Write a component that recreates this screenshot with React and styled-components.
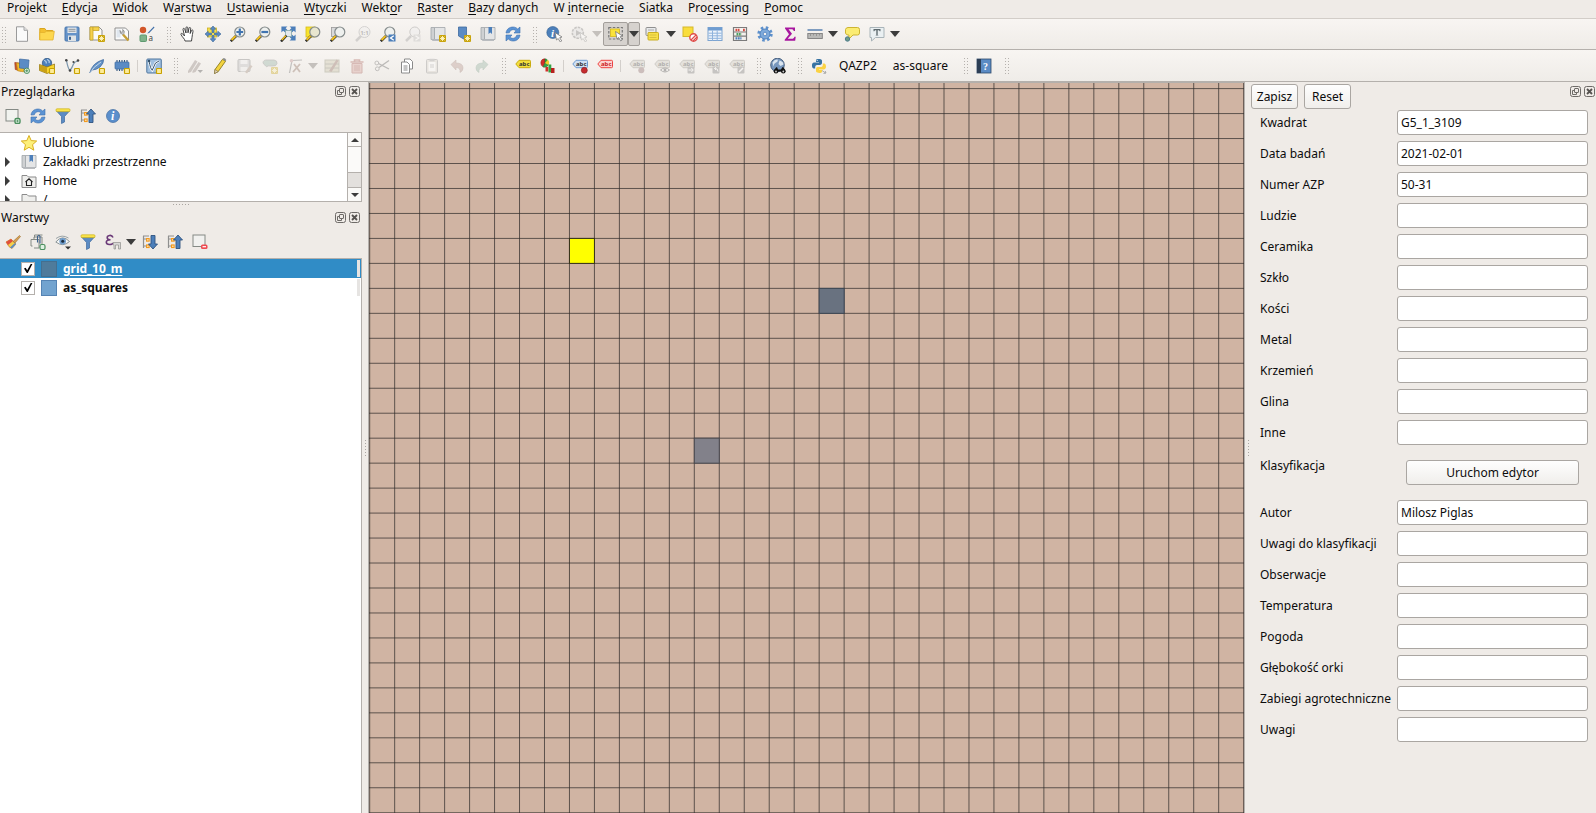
import React from "react";
import styled, { createGlobalStyle, css } from "styled-components";

const color = {
  panel: "#efebe7",
  line: "#b4b0ac",
  field: "#aaa6a2",
  text: "#0c0c0c",
};

const GlobalStyle = createGlobalStyle`
  *, *::before, *::after { box-sizing: border-box; }
  body {
    margin: 0;
    background: ${color.panel};
    color: ${color.text};
    font: 12px/16px "Noto Sans", "Open Sans", sans-serif;
  }
  button, input { font: inherit; color: inherit; margin: 0; }
  svg { display: block; flex: none; }
`;

/* ---------- icon parts ---------- */

const Svg = styled.svg.attrs({ viewBox: "0 0 16 16", "aria-hidden": true })`
  width: 16px;
  height: 16px;
  opacity: ${(p) => (p.$dim ? 0.35 : 1)};
`;

const NewBadge = () => (
  <g>
    <rect x="9" y="9" width="7" height="7" rx="1" fill="#c9a40c" />
    <path d="M12.500 10v5M10 12.500h5M10.700 10.700l3.600 3.600M14.300 10.700l-3.600 3.600" stroke="#fff6c4" strokeWidth=".9" />
  </g>
);
const SquareBadge = () => (
  <rect x="10.500" y="10.500" width="5" height="5" rx=".8" fill="#fdec9a" stroke="#c8a100" strokeWidth="1.200" />
);
const Lens = ({ fill = "#eef0ee" }) => (
  <g>
    <path d="M.8 15.200L6 10" stroke="#2b2b2b" strokeWidth="2.600" />
    <path d="M1.600 14L5.600 10" stroke="#f0bf1c" strokeWidth="1.800" />
    <circle cx="9.800" cy="6" r="5" fill={fill} stroke="#858c8c" strokeWidth="1.200" />
  </g>
);
const Cursor = ({ x = 8, y = 6 }) => (
  <path
    transform={`translate(${x} ${y})`}
    d="M0 0l1.500 7.500 1.700-1.500 2 3.400 1.500-.9-2-3.300 2.300-.7z"
    fill="#fff"
    stroke="#777"
    strokeWidth=".8"
  />
);
const Tag = ({ fill = "#f2df3c", stroke = "#c9ab10", ink = "#333", y = 0 }) => (
  <g transform={`translate(0 ${y})`}>
    <path d="M.8 7L4 3.300h10.500q1 0 1 1v5.400q0 1-1 1H4z" fill={fill} stroke={stroke} strokeWidth="1" />
    <text x="4" y="9" fontSize="6" fontWeight="700" fontFamily="Noto Sans, sans-serif" fill={ink}>abc</text>
  </g>
);
const Bookmark = () => (
  <g>
    <path d="M1 1.500h3.500v12H1z" fill="#cfd1d3" stroke="#a0a4a8" strokeWidth=".8" />
    <path d="M4.500 1.500H15v12H4.500z" fill="#e4e5e6" stroke="#a0a4a8" strokeWidth=".8" />
    <path d="M1.500 13.500h12.500v1.500H2.500z" fill="#b9bcbf" />
  </g>
);
const TreeLines = () => (
  <g fill="none">
    <path d="M1.500 2v12M1.500 5h4M1.500 12h4M1 2h6" stroke="#8f8f8f" strokeWidth="1.200" />
    <rect x="4.600" y="4.600" width="2.500" height="2.500" fill="#fff2d9" stroke="#f29a1f" strokeWidth="1.200" />
    <rect x="4.600" y="11" width="2.500" height="2.500" fill="#fff2d9" stroke="#f29a1f" strokeWidth="1.200" />
  </g>
);
const Sheet = ({ fill = "#fafafa" }) => (
  <path d="M2.500.8h7.500l3.500 3.500v11H2.500z" fill={fill} stroke="#9a9a9a" strokeWidth="1" />
);

const icons = {
  fresh: <g><Sheet /><path d="M10 .8v3.500h3.500" fill="#e2e2e2" stroke="#a5a5a5" /></g>,
  open: <g><path d="M.8 14V2.500h5l1.500 2h6.500V7" fill="#f3bf2f" stroke="#d9a51f" /><path d="M.8 14V6.500h5l1.500-1.200h8L14 14z" fill="#fdd74e" stroke="#e3b12c" strokeWidth=".8" /></g>,
  save: <g><rect x="1" y="1" width="14" height="14" rx="1" fill="#6593c9" stroke="#4a77ac" /><rect x="3.500" y="1.500" width="9" height="5.500" fill="#e6e9ec" /><path d="M4.500 3.300h7M4.500 5.200h7" stroke="#8a9199" /><rect x="4" y="9.500" width="8" height="5.500" fill="#dfe3e6" /><rect x="5" y="10.800" width="2" height="3" fill="#3f6592" /></g>,
  layout: <g><path d="M1 1h9l3 3v10H1z" fill="#fbfbf7" stroke="#8f8f8f" /><path d="M1 1h3v13H1z" fill="#f5d14c" stroke="#c9a72a" strokeWidth=".8" /><path d="M4 1h6v3.500H4z" fill="#f5d14c" stroke="#c9a72a" strokeWidth=".8" /><NewBadge /></g>,
  manager: <g><path d="M1 2h10.500l3 3v9H1z" fill="#fbfbfb" stroke="#8f8f8f" /><path d="M2.500 3.500h4v8h-4z" fill="#dfe6ee" /><path d="M9 8.500l5.500 6" stroke="#c79f33" strokeWidth="2.400" /><path d="M6 4.500q-.5 3.500 3 4l1-1.200q1-2.500-1.300-3.800l.3 2.200-1.500.7z" fill="#d7d7d7" stroke="#777" strokeWidth=".7" /></g>,
  style: <g><circle cx="4" cy="4" r="3.200" fill="#d2562a" /><path d="M14.800.5L9.500 6l-1.300 1.600 2-.6L15.500 1.500z" fill="#3f6ea8" /><rect x="1" y="9" width="6.500" height="6.500" rx="1" fill="#7fb28b" stroke="#5f9a70" /><text x="9.500" y="15" fontSize="8" fontFamily="Noto Sans, sans-serif" fill="#444">a</text></g>,
  hand: <path d="M5 15c0-2-3-4-4-6.500-.4-1.200 1-1.500 1.800-.5L4.500 10 3 3.500c-.3-1.300 1.300-1.600 1.700-.4L6 7V1.800c0-1.300 1.700-1.300 1.800 0L8 6.800l1-4.600c.3-1.200 1.900-.8 1.700.4L10.200 7.500l1.300-3c.5-1.100 1.900-.5 1.500.9-.5 2.300-.7 4-1 6L11.500 15z" fill="#fff" stroke="#333" strokeWidth=".9" />,
  pan: <g><rect x="2.500" y="2" width="9" height="9" fill="#f6e04d" stroke="#cdb022" strokeWidth=".8" /><path d="M8 0l2.800 3.200H9V6.500H7V3.200H5.200zM8 16l-2.800-3.200H7V9.500h2v3.300h1.800zM0 8l3.200-2.800V7h3.300v2H3.200v1.800zM16 8l-3.200 2.800V9H9.500V7h3.300V5.200z" fill="#5b8bc4" stroke="#3b6697" strokeWidth=".6" /></g>,
  zoomIn: <g><Lens /><path d="M9.800 2.600v6.800M6.400 6h6.800" stroke="#3f73b0" strokeWidth="2.200" /></g>,
  zoomOut: <g><Lens /><path d="M6.400 6h6.800" stroke="#3f73b0" strokeWidth="2.200" /></g>,
  zoomFull: <g><path d="M2 1h4L4.800 2.200 7 4.400 5.400 6 3.200 3.800 2 5zM15 1v4l-1.200-1.200L11.600 6 10 4.400l2.200-2.200L11 1zM15 14h-4l1.200-1.200L10 10.600 11.600 9l2.200 2.200L15 10z" fill="#4c7fba" stroke="#4c7fba" strokeWidth="1.200" /><rect x="5.500" y="4.500" width="6" height="6" fill="#e3e8ea" stroke="#8aa" strokeWidth=".8" /><path d="M1 15.500L6.500 9.500" stroke="#2b2b2b" strokeWidth="2.400" /><path d="M1.800 14L5.800 9.800" stroke="#f0bf1c" strokeWidth="1.500" /></g>,
  zoomSel: <g><rect x="1" y="1" width="9" height="10" fill="#f8e32d" stroke="#d5bc1b" strokeWidth=".8" /><Lens fill="#e8e6cf" /></g>,
  zoomLayer: <g><rect x="1.500" y="1.500" width="8" height="9" fill="#d9dadb" stroke="#999" strokeWidth=".8" /><Lens /></g>,
  zoomNative: <g><path d="M1 15L6 10" stroke="#999" strokeWidth="2.500" /><circle cx="9.500" cy="6" r="5.500" fill="#eee" stroke="#999" /><text x="5.200" y="8.500" fontSize="6" fontWeight="700" fontFamily="Noto Sans, sans-serif" fill="#555">1:1</text></g>,
  zoomPrev: <g><Lens /><rect x="8.500" y="8.500" width="7" height="7" fill="#4c7fba" /><path d="M13.800 9.800L10.500 12l3.300 2.200" fill="none" stroke="#fff" strokeWidth="1.300" /></g>,
  zoomNext: <g><path d="M1 15L6 10" stroke="#999" strokeWidth="2.500" /><circle cx="9.800" cy="6" r="5" fill="#eee" stroke="#888" /><rect x="8.500" y="8.500" width="7" height="7" fill="#bbb" /><path d="M10.500 9.800l3.300 2.200-3.300 2.200" fill="none" stroke="#fff" strokeWidth="1.300" /></g>,
  mapNew: <g><Bookmark /><NewBadge /></g>,
  markNew: <g><path d="M3.500 1h8v11.500l-1 1.500-7-4z" fill="#5b8bc4" stroke="#3d6a9f" strokeWidth=".8" /><NewBadge /></g>,
  bookmarks: <g><Bookmark /><path d="M8.500 1h3.500v7l-1.700-1.500L8.500 8z" fill="#4c7fba" /></g>,
  refresh: <g fill="#5b93d4" stroke="#3d6fad" strokeWidth=".6"><path d="M1 7C1.500 3 4.500 1 8 1c2 0 3.500.8 4.700 2L15 1v6H9l2-2.200C9 3 5.500 3.200 4.300 6.800z" /><path d="M15 9c-.5 4-3.500 6-7 6-2 0-3.500-.8-4.700-2L1 15V9h6l-2 2.200C7 13 10.500 12.800 11.700 9.200z" /></g>,
  identify: <g><circle cx="6.800" cy="6.500" r="6" fill="#4c7fba" stroke="#34608f" strokeWidth=".6" /><text x="5" y="10.500" fontSize="11" fontStyle="italic" fontWeight="700" fontFamily="Liberation Serif, serif" fill="#fff">i</text><Cursor x={9} y={6.500} /></g>,
  action: <g><circle cx="6.800" cy="6.800" r="5.500" fill="#ddd" stroke="#777" strokeWidth="1.600" strokeDasharray="2.600 1" /><path d="M5 4l5 3-5 3z" fill="#777" /><Cursor x={9} y={6.500} /></g>,
  select: <g><rect x=".8" y="1.500" width="13.500" height="11.500" fill="none" stroke="#777" strokeWidth="1.200" strokeDasharray="2.500 1.500" /><rect x="2.500" y="3" width="9" height="7.500" fill="#fbe33a" stroke="#d6b81b" strokeWidth=".8" /><Cursor x={7.500} y={5.500} /></g>,
  form: <g><rect x="1" y="1.500" width="10" height="8" rx=".8" fill="#e8eaec" stroke="#8f8f8f" /><path d="M3 4h6M3 6.500h6" stroke="#aaa" /><rect x="3" y="6.500" width="10.500" height="7.500" rx=".8" fill="#f8e04a" stroke="#c9ae22" /><path d="M4.500 9h7M4.500 11.500h7" stroke="#d8c040" /></g>,
  deselect: <g><rect x="1" y="1" width="10" height="9.500" fill="#f9dd3c" stroke="#d5b82a" /><circle cx="11.500" cy="11.500" r="3.700" fill="#fff" stroke="#df4d4a" strokeWidth="1.400" /><path d="M9 14l5-5M11 15l4-4" stroke="#df4d4a" strokeWidth="1.200" /></g>,
  table: <g><rect x="1" y="1.500" width="14" height="13" fill="#eef4fb" stroke="#7da4d0" /><path d="M1 1.500h14v3H1z" fill="#6f9dd1" /><path d="M1.500 7.200h13M1.500 9.800h13M1.500 12.300h13M5.500 4.500v10M10.200 4.500v10" stroke="#8fb3dc" strokeWidth="1" /></g>,
  abacus: <g><path d="M1.500 1v14M14.500 1v14M1 1.500h14M1 14.500h14M1 6h14M1 10.200h14" fill="none" stroke="#7b7b7b" strokeWidth="1.200" /><path d="M3.500 4h4M11 4h2" stroke="#d64b40" strokeWidth="2.400" strokeDasharray="1.800 .6" /><path d="M4.500 8.200h5" stroke="#4b9f62" strokeWidth="2.400" strokeDasharray="1.800 .6" /><path d="M3.500 12.400h6" stroke="#4c7fba" strokeWidth="2.400" strokeDasharray="1.800 .6" /></g>,
  gear: <g><circle cx="8" cy="8" r="6.200" fill="none" stroke="#5d90cc" strokeWidth="3" strokeDasharray="2.435 2.435" /><circle cx="8" cy="8" r="5" fill="#7faadb" stroke="#4f82bf" /><circle cx="8" cy="8" r="1.800" fill="#f4f2ef" stroke="#4f82bf" strokeWidth=".8" /></g>,
  sigma: <path d="M3 1.500h10v3.500h-1.300c-.2-1.300-.9-1.800-2.500-1.800H6.500L10 7.700l-4.300 5h4c1.700 0 2.300-.6 2.700-2h1.300l-.5 4H2.700v-1L7 8.200 3 2.500z" fill="#a8169f" />,
  measure: <g><path d="M.5 4h15" stroke="#3f6ea8" strokeWidth="1.300" /><rect x=".8" y="7.500" width="14.500" height="5" fill="#b9b9b7" stroke="#7e7e7e" strokeWidth=".9" /><path d="M3.500 7.500v2.500M6.500 7.500v2M9.500 7.500v2.500M12.500 7.500v2" stroke="#8a8a8a" strokeWidth=".8" /></g>,
  tip: <g><path d="M4 1.500h9.500q2 0 2 2V7q0 2-2 2H9l-4.500 4.500L5 9H4Q2 9 1.500 7V3.500q.5-2 2.500-2z" fill="#fbec72" stroke="#cdb432" /><circle cx="3.500" cy="13" r="2.200" fill="#6d9c86" stroke="#4d7b8d" /></g>,
  textNote: <g><path d="M1 1.500h14v10H6.500L2.500 15v-3.500H1z" fill="#eaf0f2" stroke="#a9b4b9" /><path d="M4.500 3h7v2.200h-.8L10 4.200H8.700v4.900l1 .5H6.300l1-.5V4.200H6l-.7 1h-.8z" fill="#5f6b70" /></g>,

  source: <g><path d="M.8 4.500l7 1-1 7.500-5.500-1.500z" fill="#c9552d" stroke="#a23f1d" strokeWidth=".7" /><path d="M2.500 5l8 .8-.8 8-6-1z" fill="#f0b92d" stroke="#c38c14" strokeWidth=".7" /><path d="M5.500 1l9.500 1-.8 9-8.700-1z" fill="#5b8bc4" stroke="#3d6a9f" strokeWidth=".7" /><circle cx="12.800" cy="12.800" r="2.700" fill="#e9f4ec" stroke="#4b8f5e" /><path d="M12.800 11.300v3M11.300 12.800h3" stroke="#4b8f5e" /></g>,
  geopackage: <g><circle cx="8" cy="5" r="4.700" fill="#4c7fba" stroke="#2b4f7a" strokeWidth=".7" /><path d="M5 2.500q3 .5 2 3M8 1.500q3 1 2 3.500" stroke="#bcd3ea" fill="none" strokeWidth="1.200" /><path d="M.5 6.500L8 9l7.500-3v6.500L8 15.500l-7.500-3z" fill="#f8d52e" stroke="#8b6d10" strokeWidth=".7" /><path d="M.8 7L8 9.200v6l-7.200-3z" fill="#caa117" /><SquareBadge /></g>,
  vector: <g><path d="M2.500 2.500Q4 11 6 12.500 8 10 9.500 6q.8-2 4-3" fill="none" stroke="#7d98ae" strokeWidth="1.300" /><circle cx="2.300" cy="2.300" r="1.300" fill="#444" /><circle cx="6" cy="12.500" r="1.300" fill="#444" /><circle cx="9.500" cy="4" r="1.100" fill="#444" /><circle cx="14" cy="2.500" r="1.300" fill="#444" /><SquareBadge /></g>,
  feather: <g><path d="M.8 15Q3 5 14.500 1.500 15 5 11 9q-4 3-8 3z" fill="#6694c8" stroke="#3d6a9f" strokeWidth=".8" /><path d="M1 15Q4 9 12 4" stroke="#dce8f3" strokeWidth=".8" fill="none" /><SquareBadge /></g>,
  chip: <g><path d="M3 2v11M5.500 2v11M8 2v11M10.500 2v11M13 2v11" stroke="#33557d" strokeWidth="1.100" /><rect x="1" y="4" width="14" height="7" rx=".8" fill="#5b8bc4" stroke="#3d6a9f" strokeWidth=".7" /><SquareBadge /></g>,
  virtual: <g><rect x=".8" y="1" width="14.500" height="14" rx="1" fill="#9fbfdf" stroke="#50779f" /><path d="M3 3q1.500 8 3.200 9.300L9.500 5l3.500-2" fill="none" stroke="#fff" strokeWidth="2.400" /><path d="M3 3q1.500 8 3.200 9.300L9.500 5l3.500-2" fill="none" stroke="#36536e" strokeWidth="1" /><circle cx="3" cy="3" r="1.300" fill="#36536e" /><SquareBadge /></g>,
  edits: <g><path d="M1 13L8 2l2.500 1.500L4 14l-3 1zM5.500 13l6-9 2.500 1.500L8.500 14l-3 1z" fill="#8c7f7a" /><path d="M10.500 12h5.500L13.200 15z" fill="#444" /></g>,
  pencil: <g><path d="M3 11.500L10.500 1.300l3 2L6.200 13.600 2.500 15.500z" fill="#f3d33f" stroke="#8b7a1d" strokeWidth=".9" /><path d="M10.500 1.300l3 2 .8-1.200q-1-1.900-2.700-2z" fill="#8c8c8c" /><path d="M3 11.500l3.200 2.100-3.700 1.900z" fill="#e9d8b4" stroke="#7b6b4b" strokeWidth=".6" /></g>,
  saveEdits: <g><rect x="1" y="1.500" width="12" height="12" rx="1" fill="#b9b9bb" stroke="#777" /><rect x="3.500" y="2" width="7" height="4" fill="#eee" /><rect x="3.500" y="9" width="7" height="4.500" fill="#eee" /><path d="M8 14l5.500-7 2 1.300L10 15.500z" fill="#a08a7a" /></g>,
  addPolygon: <g><path d="M1 5q0-3.500 5-3h6q3.500.5 3 3.500T10 8 5 8.500 1 5z" fill="#8faf9f" stroke="#777" strokeWidth=".8" /><NewBadge /></g>,
  vertex: <g><path d="M2.500 15L5 2.500 15 2" fill="none" stroke="#666" strokeWidth="1.200" /><path d="M6 14l7-8M7 6l6 8" stroke="#8b6a5a" strokeWidth="1.800" /><circle cx="4.500" cy="2.800" r="1.800" fill="#b88" /></g>,
  modify: <g><rect x="1" y="2" width="14" height="12" fill="#c9c3a6" stroke="#8a8a70" /><path d="M1 6h14M1 10h14" stroke="#7f7f6c" /><path d="M5 13L12.500 1.500l2 1.300L7.500 14z" fill="#8b6558" /></g>,
  trash: <g><path d="M1.500 4h13M5.500 4V2h5v2" fill="none" stroke="#a2544c" strokeWidth="1.600" /><path d="M3 5.500h10V15H3z" fill="#d49c95" stroke="#a2544c" /><path d="M6 7v6M8 7v6M10 7v6" stroke="#a2544c" /></g>,
  cut: <g><path d="M15 2.500L5 9.500M15 11L4.500 5.500" stroke="#555" strokeWidth="1.300" /><circle cx="2.800" cy="5" r="1.900" fill="none" stroke="#666" /><circle cx="3.300" cy="10.800" r="1.900" fill="none" stroke="#666" /></g>,
  copy: <g fill="#fff" stroke="#8a8a8a"><path d="M5.500 1h5.500l2.500 2.500V11h-8z" /><path d="M2.500 4h5.500l2.500 2.500V15h-8z" /><path d="M4.500 8h4M4.500 10h4M4.500 12h4" /></g>,
  paste: <g><rect x="2.500" y="1.500" width="11" height="13.500" rx="1" fill="#d6d2ca" stroke="#888" /><rect x="4.500" y="4" width="7" height="9" fill="#fff" /><rect x="5.500" y=".8" width="5" height="2.500" fill="#999" /><path d="M6 7h4M6 9h4" stroke="#999" /></g>,
  undo: <path d="M2 6.500L7 2v3Q14 5 14 10q0 3-3 4.500.8-5-4-5V12z" fill="#b39087" stroke="#8c6d65" strokeWidth=".6" />,
  redo: <path d="M14 6.500L9 2v3Q2 5 2 10q0 3 3 4.500-.8-5 4-5V12z" fill="#8fae9c" stroke="#6b8f7a" strokeWidth=".6" />,
  tag: <Tag y={-1} />,
  diagram: <g><path d="M5 5V.8A4.300 4.300 0 0 0 .8 5q0 3 2.400 3.800z" fill="#d22f2a" stroke="#8c1b17" strokeWidth=".5" /><path d="M5 5L3 9q3.500 1 5-1.500T7 1.500L5 .8z" fill="#36a345" stroke="#1d6e2a" strokeWidth=".5" /><path d="M5 5l3-3.200Q10 4 8.500 7z" fill="#f5d02c" /><rect x="5.500" y="9" width="2.800" height="4.500" fill="#d22f2a" /><rect x="8.500" y="6.500" width="2.800" height="8" fill="#36a345" /><rect x="11" y="10" width="3.500" height="5" fill="#b7211d" /></g>,
  tagPin: <g><Tag fill="#cfe0f3" stroke="#6d9bd0" y={-1} /><circle cx="12.300" cy="12.300" r="3" fill="#c52b2f" stroke="#8c1b1d" strokeWidth=".6" /></g>,
  tagRed: <Tag fill="#fbd3d1" stroke="#ee4440" ink="#c22" y={-1} />,
  tagDot: <g><Tag fill="#c9c6bd" stroke="#8a877e" y={-1} /><circle cx="12.300" cy="12.300" r="3" fill="#866" /></g>,
  tagEye: <g><Tag fill="#c9c6bd" stroke="#8a877e" y={-1} /><path d="M6.500 12q4.500-4 9 0-4.500 4-9 0z" fill="#fff" stroke="#444" /><circle cx="11" cy="12" r="1.500" fill="#444" /></g>,
  tagMove: <g><Tag fill="#c9c6bd" stroke="#8a877e" y={-1} /><rect x="8.500" y="8.500" width="7" height="7" rx="1" fill="#777" /><path d="M9.500 12h4.500M12.300 10l2 2-2 2" stroke="#fff" fill="none" /></g>,
  tagTurn: <g><Tag fill="#c9c6bd" stroke="#8a877e" y={-1} /><rect x="8.500" y="8.500" width="7" height="7" rx="1" fill="#777" /><path d="M14 13.500q0-3.500-3.500-3l1.500-1.200M10.500 10.500l1.500 1.500" stroke="#fff" fill="none" /></g>,
  tagEdit: <g><Tag fill="#c9c6bd" stroke="#8a877e" y={-1} /><rect x="8.500" y="8.500" width="7" height="7" rx="1" fill="#777" /><path d="M10 14l4-4" stroke="#fff" strokeWidth="1.600" /></g>,
  globe: <g><circle cx="7.500" cy="7" r="6.800" fill="#7897bd" stroke="#2c4669" strokeWidth=".8" /><path d="M2.500 4.500q2-3.500 5-3 1 2-1.500 3T3.500 8.500zM9.500 2.500q4 1 4 4l-3 1.500-2-2z" fill="#dbe5ef" /><path d="M4 13.500Q5 9.500 7 9l1 2.500h3L12.500 9q2 .5 3 4.500z" fill="#111" /><circle cx="6" cy="13.300" r="2.300" fill="#111" /><circle cx="13.300" cy="13.300" r="2.300" fill="#111" /><circle cx="6" cy="13.500" r=".9" fill="#ccc" /><circle cx="13.300" cy="13.500" r=".9" fill="#ccc" /></g>,
  python: <g><path d="M7.500 1C4.800 1 5 2.200 5 2.200V4h3v.6H3.300S1 4.400 1 7.500 3 10.500 3 10.500h1.200V8.900s0-2 2-2h3s1.800 0 1.800-1.800V2.900S11.300 1 7.500 1z" fill="#3873a3" /><circle cx="6.200" cy="2.500" r=".6" fill="#fff" /><path d="M8.500 15c2.700 0 2.500-1.200 2.500-1.200V12H8v-.6h4.700s2.300.2 2.300-2.900-2-3-2-3h-1.200v1.600s0 2-2 2h-3S5 9.100 5 10.900v2.200S4.700 15 8.500 15z" fill="#fbd243" /><path d="M11 12.500l3.500 2.500M12.500 15.500l2.500-.5-.8-2" stroke="#999" fill="none" strokeWidth=".8" /></g>,
  help: <g><rect x="1" y="1" width="14" height="14" fill="#5b8bc4" stroke="#2f4a6a" strokeWidth=".8" /><rect x="1" y="1" width="4" height="14" fill="#2c3e55" /><text x="7" y="11.500" fontSize="10" fontWeight="700" fontFamily="Liberation Serif, serif" fill="#fff">?</text></g>,

  addLayer: <g><rect x="1" y="1.500" width="12" height="11.500" fill="#f1f3ef" stroke="#858a85" /><rect x="10" y="10.500" width="5" height="5" rx="1.500" fill="#dff0e2" stroke="#4b8f5e" strokeWidth="1.400" /><path d="M12.500 11.800v2.500M11.200 13h2.600" stroke="#4b8f5e" strokeWidth=".8" /></g>,
  removeLayer: <g><rect x="1" y="1" width="12" height="11.500" fill="#f1f1ef" stroke="#858a85" /><rect x="9" y="10.500" width="6.500" height="4.500" rx="1.500" fill="#ee4b52" /><path d="M10.500 12.700h3.500" stroke="#fff" strokeWidth="1.200" /></g>,
  filter: <g><path d="M1.500 3h13L9.500 8.500V14L6.500 15.500v-7z" fill="#5b8bc4" stroke="#3d6a9f" strokeWidth=".7" /><rect x="1" y=".8" width="14" height="2.800" rx="1" fill="#f9e34a" stroke="#cdb120" strokeWidth=".7" /></g>,
  collapse: <g><TreeLines /><path d="M11 1l4.500 5H13v8.500H9V6H6.500z" fill="#4c7fba" stroke="#2f5480" strokeWidth=".9" /></g>,
  expand: <g><TreeLines /><path d="M11 15l4.500-5H13V1.500H9V10H6.500z" fill="#4c7fba" stroke="#2f5480" strokeWidth=".9" /></g>,
  info: <g><circle cx="8" cy="8" r="6.500" fill="#5b8fcc" stroke="#3d6a9f" strokeWidth=".7" /><text x="6" y="12" fontSize="12" fontStyle="italic" fontWeight="700" fontFamily="Liberation Serif, serif" fill="#fff">i</text></g>,
  brush: <g><path d="M1 8l5-3 5 5-4 4.500q-3-.5-6-6.500z" fill="#f4cf4a" stroke="#cf7f34" strokeWidth=".7" /><path d="M1 8l2 3 5-4-2-2z" fill="#df4f3e" /><path d="M5 13.500l5-4.500 1 1-4 4.500z" fill="#5b8bc4" /><path d="M8 7.500L14.500 1.500l1 1L10 9z" fill="#d6a054" stroke="#9a6c2a" strokeWidth=".6" /></g>,
  group: <g><path d="M4.500 3.500V1h8M2.500 12H1V5.500h8V14H4" fill="none" stroke="#858a85" /><path d="M4 5.500V3h8v9" fill="none" stroke="#858a85" /><path d="M7.500 8.500v-6q1.500-2.500 2.500 0v7" fill="none" stroke="#3c618c" strokeWidth="1.100" /><rect x="10" y="10.500" width="5" height="5" rx="1.500" fill="#dff0e2" stroke="#4b8f5e" strokeWidth="1.200" /></g>,
  eye: <g><path d="M.8 8Q7.500 0 14.500 7.500 8 13.500.8 8z" fill="#f3f5f5" stroke="#8a9396" /><circle cx="7.700" cy="7.300" r="3.300" fill="#6f9dcd" /><circle cx="7.700" cy="7.300" r="1.500" fill="#1d2d3d" /><path d="M1 4.500Q7 0 13.500 4" fill="none" stroke="#9aa3a6" /><path d="M10 12.500h6l-3 3z" fill="#333" /></g>,
  epsilon: <g><path d="M8 3.500Q7 1 4.500 1.500 2 2 2.200 3.800T5.500 5.800Q1.200 6 1.300 8.300T4.500 10.500 8 9" fill="none" stroke="#6b3a78" strokeWidth="1.600" /><path d="M8 8.500h7.500V15h-2v-4h-3v4h-1.500v-3z" fill="#d8d8d6" stroke="#8f8f8d" strokeWidth=".7" /></g>,

  star: <path d="M8 .5l2.200 5.100 5.500.4-4.200 3.700 1.300 5.500L8 12.300l-4.800 2.900 1.300-5.500L.3 6l5.500-.4z" fill="#fdf07a" stroke="#d9ae1e" strokeWidth="1" />,
  home: <g><path d="M1 14.500v-12h5l1.500 1.500H15v10.500z" fill="#efefed" stroke="#8b8b8b" /><path d="M4.500 9L8 5.800 11.500 9M5.500 8.500v4h5v-4" fill="none" stroke="#222" strokeWidth="1.100" /></g>,
  folder: <path d="M1 14.500v-12h5l1.500 1.500H15v10.500z" fill="#efefed" stroke="#8b8b8b" />,
};

const Icon = ({ name, dim }) => <Svg $dim={dim}>{icons[name]}</Svg>;

/* ---------- shell ---------- */

const Window = styled.div`
  display: flex;
  flex-direction: column;
  height: 100vh;
  overflow: hidden;
`;

const MenuBar = styled.nav`
  display: flex;
  flex: none;
  align-items: flex-start;
  height: 18px;
`;

const MenuItem = styled.button`
  padding: 0 8px 0 7px;
  border: 0;
  background: none;
  line-height: 15px;
  white-space: nowrap;

  u {
    text-underline-offset: 2px;
  }
`;

const Toolbar = styled.div`
  display: flex;
  flex: none;
  align-items: center;
  height: 32px;
  padding-left: 1px;
  border-top: ${(p) => (p.$first ? "1px solid #d2cdc8" : "0")};
  border-bottom: 1px solid ${color.line};
  background: linear-gradient(#f8f5f2, #efece8);
`;

const Grip = styled.span`
  flex: none;
  width: 5px;
  height: 17px;
  margin: 0 ${(p) => (p.$lead ? 3 : 4)}px 0 ${(p) => (p.$lead ? 0 : 7)}px;
  background: radial-gradient(circle, #b5b1ad 1px, transparent 1px) 0 0 / 3px 3px;
`;

const Separator = styled.span`
  flex: none;
  width: 1px;
  height: 12px;
  margin: 0 3px;
  background: #d3cfcb;
`;

const ToolButton = styled.button`
  display: flex;
  flex: none;
  align-items: center;
  justify-content: center;
  width: 25px;
  height: 24px;
  padding: 0;
  border: 0;
  border-radius: 2px;
  background: none;

  ${(p) =>
    p.$pressed &&
    css`
      border: 1px solid #a39f9b;
      background: #d6d2ce;
    `}
`;

const ArrowButton = styled(ToolButton)`
  width: 12px;
`;

const TextButton = styled(ToolButton)`
  width: auto;
  padding: 0 8px;
`;

const Caret = styled.span`
  flex: none;
  border: solid transparent;
  border-width: 6px 5px 0;
  border-top-color: ${(p) => (p.$dim ? "#c4c0bc" : "#3c3c3c")};
`;

const Main = styled.main`
  display: flex;
  flex: 1;
  min-height: 0;
`;

const LeftDocks = styled.aside`
  display: flex;
  flex: none;
  flex-direction: column;
  width: 362px;
`;

const SplitterV = styled.div`
  display: flex;
  flex: none;
  align-items: center;
  justify-content: center;
  width: 6px;

  &::after {
    content: "";
    width: 1px;
    height: 16px;
    background: repeating-linear-gradient(#aaa6a2 0 1px, transparent 1px 3px);
  }
`;

const SplitterH = styled.div`
  display: flex;
  flex: none;
  justify-content: center;
  height: 6px;
  padding-top: 2px;

  &::after {
    content: "";
    width: 16px;
    height: 1px;
    background: repeating-linear-gradient(90deg, #aaa6a2 0 1px, transparent 1px 3px);
  }
`;

const DockTitle = styled.header`
  display: flex;
  flex: none;
  align-items: center;
  gap: 3px;
  height: 18px;
  padding: 0 2px 0 1px;

  h2 {
    flex: 1;
    margin: 0;
    padding-top: 2px;
    font-size: 12px;
    font-weight: 400;
  }
`;

const DockButton = styled.button`
  display: flex;
  flex: none;
  width: 11px;
  height: 11px;
  padding: 0;
  border: 0;
  background: none;

  svg {
    width: 11px;
    height: 11px;
  }
`;

const DockTools = styled.div`
  display: flex;
  flex: none;
  align-items: center;
  height: 32px;
`;

/* ---------- browser tree ---------- */

const TreeBox = styled.div`
  display: flex;
  flex: none;
  height: 70px;
  overflow: hidden;
  border: 1px solid ${color.line};
  border-left: 0;
  background: #fff;
`;

const Tree = styled.ul`
  flex: 1;
  margin: 0;
  padding: 0;
  list-style: none;
`;

const TreeRow = styled.li`
  display: flex;
  align-items: center;
  gap: 6px;
  height: 19px;
  padding-left: 5px;
`;

const Twisty = styled.span`
  width: 5px;
  margin-right: 5px;
  border: solid transparent;
  border-width: 5px 0 5px 5px;
  border-left-color: ${(p) => (p.$open ? "#3c3c3c" : "transparent")};
`;

const ScrollBar = styled.div`
  display: flex;
  flex: none;
  flex-direction: column;
  width: 14px;
  border-left: 1px solid ${color.line};
  background: #e3e0dd;
`;

const ScrollStep = styled.button`
  display: flex;
  flex: none;
  align-items: center;
  justify-content: center;
  height: 13px;
  padding: 0;
  border: 0;
  background: #faf9f7;

  &::after {
    content: "";
    border: solid transparent;
    border-width: ${(p) => (p.$up ? "0 4px 4px" : "4px 4px 0")};
    border-color: ${(p) => (p.$up ? "transparent transparent #3c3c3c" : "#3c3c3c transparent transparent")};
  }
`;

const ScrollTrack = styled.div`
  flex: 1;
  border: solid ${color.line};
  border-width: 1px 0;
`;

const ScrollThumb = styled.div`
  height: 66%;
  border-bottom: 1px solid ${color.line};
  background: #fbfaf9;
`;

/* ---------- layers ---------- */

const LayerList = styled.ul`
  flex: 1;
  margin: 0;
  padding: 0;
  border: solid ${color.line};
  border-width: 1px 1px 0 0;
  background: #fff;
  list-style: none;
`;

const LayerRow = styled.li`
  display: flex;
  align-items: center;
  height: 19px;
  padding: 0 1px 0 21px;
  background: ${(p) => (p.$current ? "#308cc6" : "none")};
  color: ${(p) => (p.$current ? "#fff" : color.text)};

  label {
    flex: 1;
    font-weight: 700;
    text-decoration: ${(p) => (p.$current ? "underline" : "none")};
    text-underline-offset: 2px;
  }

  &::after {
    content: "";
    width: 3px;
    height: 17px;
    background: #e6e4e2;
  }
`;

const Check = styled.input.attrs({ type: "checkbox" })`
  display: flex;
  align-items: center;
  justify-content: center;
  appearance: none;
  width: 14px;
  height: 14px;
  border: 1px solid #b4b0ac;
  background: #fff;

  &:checked::after {
    content: "";
    width: 10px;
    height: 10px;
    background: #000;
    clip-path: polygon(10% 50%, 26% 42%, 42% 68%, 80% 0, 94% 4%, 48% 96%, 38% 96%);
  }
`;

const Swatch = styled.span`
  width: 16px;
  height: 16px;
  margin: 0 6px;
  border: 1px solid ${(p) => p.$edge};
  background: ${(p) => p.$fill};
`;

/* ---------- map ---------- */

const Canvas = styled.section`
  flex: 1;
  min-width: 0;
  overflow: hidden;
  border: solid ${color.line};
  border-width: 1px 1px 0;
  background: #d0b4a3;

  svg {
    width: 100%;
    height: 100%;
  }
`;

const CELL = 24.97;
const ORIGIN = { x: 0.7, y: 5.6 };
const STEPS = Array.from({ length: 120 }, (_, i) => i);
const SQUARES = [
  { col: 8, row: 6, fill: "#ffff00", edge: "#333019" },
  { col: 18, row: 8, fill: "#697280", edge: "#3c4654" },
  { col: 13, row: 14, fill: "#82818a", edge: "#4a4a50" },
];

const GridMap = () => (
  <svg role="img" aria-label="grid_10_m">
    <g stroke="#312c2b" strokeOpacity=".72" strokeWidth="1">
      {STEPS.map((i) => (
        <line key={`v${i}`} x1={ORIGIN.x + i * CELL} x2={ORIGIN.x + i * CELL} y1="0" y2="100%" />
      ))}
      {STEPS.map((i) => (
        <line key={`h${i}`} y1={ORIGIN.y + i * CELL} y2={ORIGIN.y + i * CELL} x1="0" x2="100%" />
      ))}
    </g>
    {SQUARES.map((s) => (
      <rect
        key={s.fill}
        x={ORIGIN.x + s.col * CELL}
        y={ORIGIN.y + s.row * CELL}
        width={CELL}
        height={CELL}
        fill={s.fill}
        stroke={s.edge}
      />
    ))}
  </svg>
);

/* ---------- form dock ---------- */

const FormDock = styled.aside`
  flex: none;
  width: 345px;
`;

const FormHead = styled.header`
  display: flex;
  align-items: flex-start;
  gap: 6px;
  padding: 2px 1px 1px 0;
`;

const PushButton = styled.button`
  min-width: 47px;
  height: 25px;
  padding: 0 4px;
  border: 1px solid ${color.field};
  border-radius: 3px;
  background: linear-gradient(#fefefe, #f0eeeb);
`;

const DockButtons = styled.div`
  display: flex;
  gap: 3px;
  margin: 2px 0 0 auto;
`;

const Form = styled.form`
  display: flex;
  flex-direction: column;
  gap: 6px;
  padding: 0 8px 0 9px;
`;

const Field = styled.div`
  display: grid;
  grid-template-columns: 137px 1fr;
  line-height: 25px;
`;

const TextInput = styled.input.attrs({ type: "text" })`
  min-width: 0;
  height: 25px;
  padding: 0 3px;
  border: 1px solid ${color.field};
  border-radius: 3px;
  background: #fff;
`;

const EditorField = styled(Field)`
  line-height: 30px;

  button {
    margin: 9px;
    line-height: 16px;
  }
`;

/* ---------- content ---------- */

const MENUS = [
  ["Projekt"],
  ["", "E", "dycja"],
  ["", "W", "idok"],
  ["W", "a", "rstwa"],
  ["", "U", "stawienia"],
  ["", "W", "tyczki"],
  ["Wekt", "o", "r"],
  ["", "R", "aster"],
  ["", "B", "azy danych"],
  ["W ", "i", "nternecie"],
  ["Siatka"],
  ["Pro", "c", "essing"],
  ["", "P", "omoc"],
];

const BAR_ONE =
  "| fresh open save layout manager style | hand pan zoomIn zoomOut zoomFull zoomSel zoomLayer zoomNative~ zoomPrev zoomNext~ mapNew markNew bookmarks refresh | identify action~ v~ select! v! form v deselect table abacus gear sigma measure v tip textNote v".split(" ");
const BAR_TWO =
  "| source geopackage vector feather chip / virtual | edits~ pencil saveEdits~ addPolygon~ vertex~ v~ modify~ trash~ cut~ copy paste~ undo~ redo~ | tag diagram / tagPin tagRed / tagDot~ tagEye~ tagMove~ tagTurn~ tagEdit~ | globe | python =QAZP2 =as-square | help |".split(" ");
const BROWSER_TOOLS = ["addLayer", "refresh", "filter", "collapse", "info"];
const LAYER_TOOLS = ["brush", "group", "eye", "filter", "epsilon", "v", "expand", "collapse", "removeLayer"];

const Tools = ({ items }) =>
  items.map((item, i) => {
    const dim = item.endsWith("~");
    const pressed = item.endsWith("!");
    const name = item.replace(/[~!]$/, "");
    if (name === "|") return <Grip key={i} $lead={i === 0} />;
    if (name === "/") return <Separator key={i} />;
    if (name.startsWith("=")) return <TextButton key={i}>{name.slice(1)}</TextButton>;
    if (name === "v")
      return (
        <ArrowButton key={i} aria-label="menu" disabled={dim} $pressed={pressed}>
          <Caret $dim={dim} />
        </ArrowButton>
      );
    return (
      <ToolButton key={i} aria-label={name} disabled={dim} $pressed={pressed}>
        <Icon name={name} dim={dim} />
      </ToolButton>
    );
  });

const FloatClose = () => (
  <>
    <DockButton aria-label="float">
      <svg viewBox="0 0 11 11" fill="none" stroke="#6e6b68">
        <rect x=".5" y=".5" width="10" height="10" rx="2" />
        <rect x="4.500" y="2.500" width="4" height="4" rx=".5" />
        <path d="M4.500 4.500h-2v4h4v-2" />
      </svg>
    </DockButton>
    <DockButton aria-label="close">
      <svg viewBox="0 0 11 11" fill="none" stroke="#6e6b68">
        <rect x=".5" y=".5" width="10" height="10" rx="2" />
        <path d="M3 3l5 5M8 3L3 8" stroke="#55524f" strokeWidth="1.800" />
      </svg>
    </DockButton>
  </>
);

const FIELDS_TOP = [
  ["Kwadrat", "G5_1_3109"],
  ["Data badań", "2021-02-01"],
  ["Numer AZP", "50-31"],
  ["Ludzie", ""],
  ["Ceramika", ""],
  ["Szkło", ""],
  ["Kości", ""],
  ["Metal", ""],
  ["Krzemień", ""],
  ["Glina", ""],
  ["Inne", ""],
];
const FIELDS_BOTTOM = [
  ["Autor", "Milosz Piglas"],
  ["Uwagi do klasyfikacji", ""],
  ["Obserwacje", ""],
  ["Temperatura", ""],
  ["Pogoda", ""],
  ["Głębokość orki", ""],
  ["Zabiegi agrotechniczne", ""],
  ["Uwagi", ""],
];

const Fields = ({ rows }) =>
  rows.map(([label, value]) => (
    <Field key={label}>
      <label htmlFor={label}>{label}</label>
      <TextInput id={label} defaultValue={value} />
    </Field>
  ));

export default function App() {
  return (
    <Window>
      <GlobalStyle />
      <MenuBar>
        {MENUS.map(([before, key, after]) => (
          <MenuItem key={before + key + after}>
            {before}
            {key && <u>{key}</u>}
            {after}
          </MenuItem>
        ))}
      </MenuBar>
      <Toolbar $first>
        <Tools items={BAR_ONE} />
      </Toolbar>
      <Toolbar>
        <Tools items={BAR_TWO} />
      </Toolbar>

      <Main>
        <LeftDocks>
          <DockTitle>
            <h2>Przeglądarka</h2>
            <FloatClose />
          </DockTitle>
          <DockTools>
            <Tools items={BROWSER_TOOLS} />
          </DockTools>
          <TreeBox>
            <Tree>
              <TreeRow><Twisty /><Icon name="star" />Ulubione</TreeRow>
              <TreeRow><Twisty $open /><Icon name="bookmarks" />Zakładki przestrzenne</TreeRow>
              <TreeRow><Twisty $open /><Icon name="home" />Home</TreeRow>
              <TreeRow><Twisty $open /><Icon name="folder" />/</TreeRow>
            </Tree>
            <ScrollBar>
              <ScrollStep $up aria-label="up" />
              <ScrollTrack><ScrollThumb /></ScrollTrack>
              <ScrollStep aria-label="down" />
            </ScrollBar>
          </TreeBox>
          <SplitterH />
          <DockTitle>
            <h2>Warstwy</h2>
            <FloatClose />
          </DockTitle>
          <DockTools>
            <Tools items={LAYER_TOOLS} />
          </DockTools>
          <LayerList>
            <LayerRow $current>
              <Check id="grid" defaultChecked />
              <Swatch $fill="#4f7b9b" $edge="#446f8f" />
              <label htmlFor="grid">grid_10_m</label>
            </LayerRow>
            <LayerRow>
              <Check id="squares" defaultChecked />
              <Swatch $fill="#72a3cf" $edge="#5583b3" />
              <label htmlFor="squares">as_squares</label>
            </LayerRow>
          </LayerList>
        </LeftDocks>
        <SplitterV />
        <Canvas>
          <GridMap />
        </Canvas>
        <SplitterV />
        <FormDock>
          <FormHead>
            <PushButton>Zapisz</PushButton>
            <PushButton>Reset</PushButton>
            <DockButtons>
              <FloatClose />
            </DockButtons>
          </FormHead>
          <Form onSubmit={(e) => e.preventDefault()}>
            <Fields rows={FIELDS_TOP} />
            <EditorField>
              <span>Klasyfikacja</span>
              <PushButton type="button">Uruchom edytor</PushButton>
            </EditorField>
            <Fields rows={FIELDS_BOTTOM} />
          </Form>
        </FormDock>
      </Main>
    </Window>
  );
}
